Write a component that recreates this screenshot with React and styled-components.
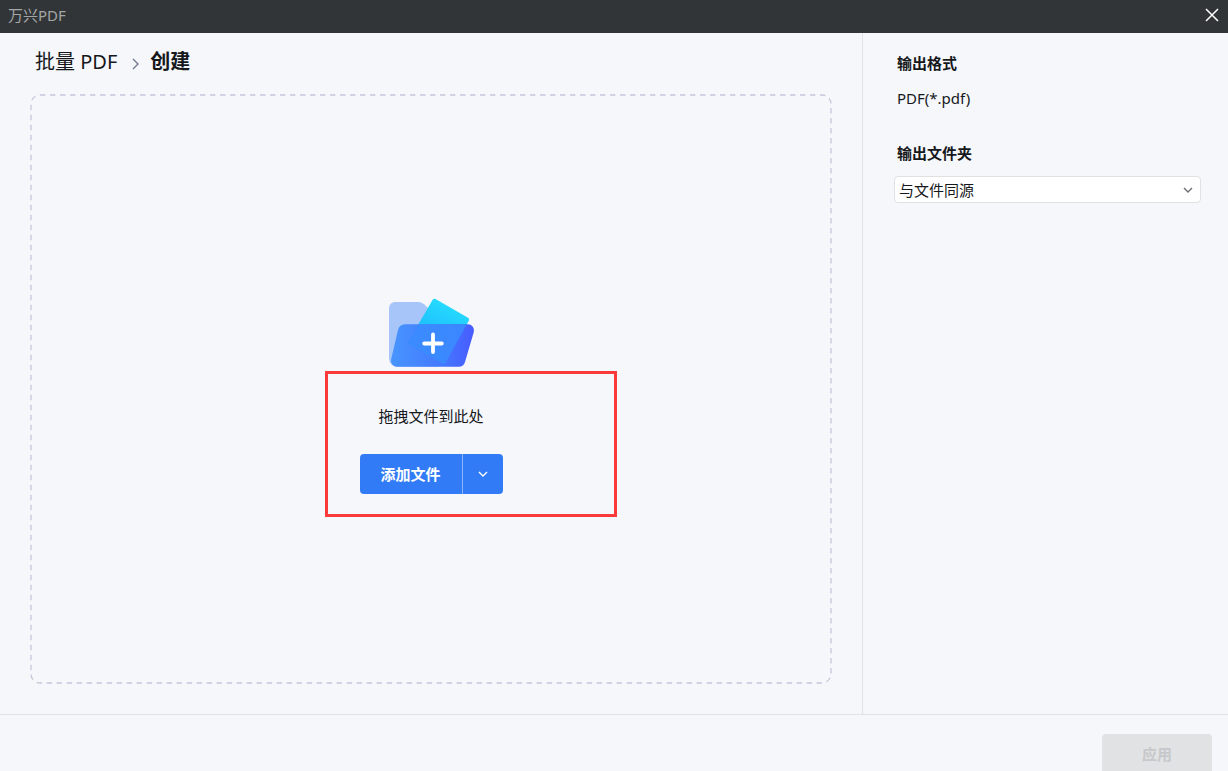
import React, { useState } from "react";
import styled, { createGlobalStyle } from "styled-components";

const GlobalStyle = createGlobalStyle`
  * {
    box-sizing: border-box;
  }
  body {
    margin: 0;
    color: #16181b;
    background: #f5f7fb;
    font-family: "Noto Sans", "Noto Sans CJK SC", sans-serif;
    font-size: 15px;
    line-height: 20px;
  }
  button,
  select {
    font: inherit;
  }
`;

const Chevron = ({ size = 12, dir = "down" }) => (
  <svg width={size} height={size} viewBox="0 0 12 12" fill="none" aria-hidden="true">
    <path
      d={dir === "down" ? "M2 4l4 4 4-4" : "M4 1l5 5-5 5"}
      stroke="currentColor"
      strokeWidth="1.4"
    />
  </svg>
);

const FolderIcon = () => (
  <svg width="96" height="96" viewBox="0 0 96 96" aria-hidden="true">
    <defs>
      <linearGradient id="front" x1="0" y1="0" x2="1" y2="0">
        <stop offset="0" stopColor="#4795ff" />
        <stop offset="0.6" stopColor="#4479ff" />
        <stop offset="1" stopColor="#485bff" />
      </linearGradient>
      <linearGradient id="sheet" x1="0.7" y1="0" x2="0.3" y2="1">
        <stop offset="0" stopColor="#26e0ff" />
        <stop offset="0.45" stopColor="#20c4fc" />
        <stop offset="1" stopColor="#18a8fa" />
      </linearGradient>
      <clipPath id="pocket">
        <path d="M22 40.300H85a6 6 0 0 1 5.800 7.600L82 78a6.500 6.500 0 0 1-6.200 4.800H14a6 6 0 0 1-5.900-7.400L15 46a7.500 7.500 0 0 1 7-5.700z" />
      </clipPath>
    </defs>
    <path
      d="M12 18H35a9 9 0 0 1 6 2.300L55 33V82.700H14a8 8 0 0 1-8-8V24a6 6 0 0 1 6-6z"
      fill="#a8c5f9"
    />
    <path
      d="M49.500 16a2.200 2.200 0 0 1 3-.9L85 33.700a2.200 2.200 0 0 1 .8 3L62.500 79a2.200 2.200 0 0 1-3 .8L26.200 60.600a2.200 2.200 0 0 1-.8-3z"
      fill="url(#sheet)"
    />
    <path
      d="M22 40.300H85a6 6 0 0 1 5.800 7.600L82 78a6.500 6.500 0 0 1-6.200 4.800H14a6 6 0 0 1-5.900-7.400L15 46a7.500 7.500 0 0 1 7-5.700z"
      fill="url(#front)"
    />
    <g clipPath="url(#pocket)">
      <path
        d="M49.500 16a2.200 2.200 0 0 1 3-.9L85 33.700a2.200 2.200 0 0 1 .8 3L62.500 79a2.200 2.200 0 0 1-3 .8L26.200 60.600a2.200 2.200 0 0 1-.8-3z"
        fill="#3a8bff"
        fillOpacity="0.9"
      />
    </g>
    <path
      d="M50 50.500v17.600M41.200 59.500h17.600"
      stroke="#fff"
      strokeWidth="3.800"
      strokeLinecap="round"
    />
  </svg>
);

const App = () => {
  const [folder, setFolder] = useState("source");

  return (
    <Window>
      <GlobalStyle />
      <TitleBar>
        <span>万兴PDF</span>
        <CloseButton aria-label="关闭">
          <svg width="14" height="14" viewBox="0 0 14 14" aria-hidden="true">
            <path d="M1 1l12 12M13 1L1 13" stroke="currentColor" strokeWidth="1.5" />
          </svg>
        </CloseButton>
      </TitleBar>
      <Content>
        <Main>
          <Breadcrumb>
            <span>批量 PDF</span>
            <Separator>
              <Chevron dir="right" />
            </Separator>
            <strong>创建</strong>
          </Breadcrumb>
          <DropZone>
            <Outline aria-hidden="true">
              <rect width="100%" height="100%" rx="9" />
            </Outline>
            <Upload>
              <FolderIcon />
              <Hint>拖拽文件到此处</Hint>
              <SplitButton>
                <AddButton>添加文件</AddButton>
                <MoreButton aria-label="更多">
                  <Chevron />
                </MoreButton>
              </SplitButton>
              <Highlight />
            </Upload>
          </DropZone>
        </Main>
        <Sidebar>
          <Field>
            <Label as="h2">输出格式</Label>
            <Value>PDF(*.pdf)</Value>
          </Field>
          <Field>
            <Label htmlFor="folder">输出文件夹</Label>
            <SelectBox>
              <Select
                id="folder"
                value={folder}
                onChange={(e) => setFolder(e.target.value)}
              >
                <option value="source">与文件同源</option>
              </Select>
              <Chevron />
            </SelectBox>
          </Field>
        </Sidebar>
      </Content>
      <Footer>
        <ApplyButton disabled>应用</ApplyButton>
      </Footer>
    </Window>
  );
};

const Window = styled.div`
  display: flex;
  flex-direction: column;
  height: 100vh;
  overflow: hidden;
`;

const TitleBar = styled.header`
  display: flex;
  align-items: center;
  justify-content: space-between;
  flex: none;
  height: 33px;
  padding: 0 8px 3px;
  color: #a3a5a7;
  background: #323537;
`;

const CloseButton = styled.button`
  display: flex;
  padding: 1px;
  border: 0;
  color: #fff;
  background: transparent;
  cursor: pointer;
`;

const Content = styled.div`
  display: flex;
  flex: 1;
  min-height: 0;
`;

const Main = styled.main`
  display: flex;
  flex-direction: column;
  flex: 1;
  padding: 15px 30px 30px;
`;

const Breadcrumb = styled.nav`
  display: flex;
  align-items: center;
  margin-bottom: 18px;
  padding-left: 5px;
  font-size: 20px;
  line-height: 28px;
`;

const Separator = styled.span`
  display: flex;
  padding: 4px 9px 0 12px;
  color: #70778f;
`;

const DropZone = styled.section`
  position: relative;
  display: flex;
  align-items: center;
  justify-content: center;
  flex: 1;
`;

const Outline = styled.svg`
  position: absolute;
  inset: 0;
  width: 100%;
  height: 100%;
  padding: 1px;
  overflow: visible;
  pointer-events: none;

  rect {
    fill: none;
    stroke: #c6c8da;
    stroke-width: 1.3;
    stroke-dasharray: 5.5 4.5;
  }
`;

const Upload = styled.div`
  position: relative;
  display: flex;
  flex-direction: column;
  align-items: center;
`;

const Hint = styled.p`
  margin: 26px 0 28px;
`;

const SplitButton = styled.div`
  display: flex;
  height: 40px;
  border-radius: 4px;
  color: #fff;
  background: #317cf6;
  overflow: hidden;
`;

const AddButton = styled.button`
  width: 102px;
  padding: 0;
  border: 0;
  color: inherit;
  background: transparent;
  font-weight: 700;
  cursor: pointer;
`;

const MoreButton = styled.button`
  display: flex;
  align-items: center;
  justify-content: center;
  width: 41px;
  padding: 0;
  border: 0;
  border-left: 1px solid #8bb5fa;
  color: inherit;
  background: transparent;
  cursor: pointer;
`;

const Highlight = styled.div`
  position: absolute;
  top: 87px;
  right: -114px;
  bottom: -23px;
  left: -35px;
  border: 3px solid #fb3a3a;
  pointer-events: none;
`;

const Sidebar = styled.aside`
  display: flex;
  flex-direction: column;
  gap: 33px;
  width: 366px;
  padding: 20px 27px 0 31px;
  border-left: 1px solid #e0e2e6;
`;

const Field = styled.div`
  display: flex;
  flex-direction: column;
`;

const Label = styled.label`
  margin: 0 0 13px;
  padding-left: 3px;
  font-size: 15px;
  font-weight: 700;
`;

const Value = styled.span`
  padding-left: 3px;
  line-height: 24px;
`;

const SelectBox = styled.div`
  position: relative;
  color: #6d6f73;

  svg {
    position: absolute;
    top: 8px;
    right: 7px;
    pointer-events: none;
  }
`;

const Select = styled.select`
  display: block;
  width: 100%;
  height: 27px;
  padding: 0 24px 0 4px;
  border: 1px solid #dfe1e5;
  border-radius: 4px;
  color: #16181b;
  background: #fff;
  appearance: none;
`;

const Footer = styled.footer`
  display: flex;
  align-items: flex-start;
  justify-content: flex-end;
  flex: none;
  height: 57px;
  padding: 19px 16px 0;
  border-top: 1px solid #e0e2e6;
`;

const ApplyButton = styled.button`
  flex: none;
  width: 110px;
  height: 40px;
  border: 0;
  border-radius: 4px;
  color: #c6c8cb;
  background: #e1e2e4;
  font-weight: 700;
`;

export default App;
